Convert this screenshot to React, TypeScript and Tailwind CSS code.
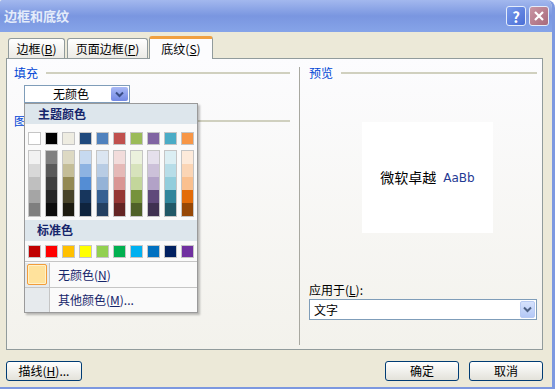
import React from 'react';

const font = { fontFamily: '"Noto Sans CJK SC", "Liberation Sans", sans-serif' };

const theme = ['#FFFFFF', '#000000', '#EEECE1', '#1F497D', '#4F81BD', '#C0504D', '#9BBB59', '#8064A2', '#4BACC6', '#F79646'];
const shades = [
	['#F2F2F2', '#D8D8D8', '#BFBFBF', '#A5A5A5', '#7F7F7F'],
	['#7F7F7F', '#595959', '#3F3F3F', '#262626', '#0C0C0C'],
	['#DDD9C3', '#C4BD97', '#938953', '#494429', '#1D1B10'],
	['#C6D9F0', '#8DB3E2', '#548DD4', '#17365D', '#0F243E'],
	['#DBE5F1', '#B8CCE4', '#95B3D7', '#366092', '#244061'],
	['#F2DCDB', '#E5B9B7', '#D99694', '#953734', '#632423'],
	['#EBF1DD', '#D7E3BC', '#C3D69B', '#76923C', '#4F6128'],
	['#E5E0EC', '#CCC1D9', '#B2A2C7', '#5F497A', '#3F3151'],
	['#DBEEF3', '#B7DDE8', '#92CDDC', '#31859B', '#205867'],
	['#FDEADA', '#FBD5B5', '#FAC08F', '#E36C09', '#974806'],
];
const standard = ['#C00000', '#FF0000', '#FFC000', '#FFFF00', '#92D050', '#00B050', '#00B0F0', '#0070C0', '#002060', '#7030A0'];

function Chevron({ color = '#4D6185' }: { color?: string }) {
	return (
		<svg width="9" height="7" viewBox="0 0 9 7">
			<path d="M1 1.5 L4.5 5 L8 1.5" fill="none" stroke={color} strokeWidth="2" />
		</svg>
	);
}

function SectionHead({ label }: { label: string }) {
	return (
		<div className="flex items-center h-[14px]">
			<span className="text-[12px] leading-none text-[#0046D5]">{label}</span>
			<div className="flex-1 ml-[8px] h-[2px] bg-[#D0D0BF]" />
		</div>
	);
}

function XpButton({ children, className }: { children: React.ReactNode; className?: string }) {
	return (
		<div
			className={`h-[20px] flex items-center justify-center rounded-[3px] border border-[#003C74] bg-gradient-to-b from-[#FFFFFF] to-[#E3E2DA] text-[12px] text-black ${className ?? ''}`}
		>
			{children}
		</div>
	);
}

function ColorPopup() {
	return (
		<div className="absolute left-[24px] top-[103px] w-[174px] h-[210px] border border-[#9A9A9A] bg-[#FAFAFA] shadow-[2px_2px_2px_rgba(0,0,0,0.25)] flex flex-col">
			<div className="h-[20px] bg-[#DDE6EC] flex items-center pl-[13px] text-[12px] font-bold text-[#15256B]">主题颜色</div>
			<div className="flex gap-[4px] pl-[3px] mt-[8px]">
				{theme.map((c) => (
					<div key={c} className="w-[13px] h-[13px] border border-[#C5C5C5]" style={{ background: c }} />
				))}
			</div>
			<div className="flex gap-[4px] pl-[3px] mt-[5px]">
				{shades.map((col, i) => (
					<div key={i} className="w-[13px] border border-[#C5C5C5] flex flex-col">
						{col.map((c, j) => (
							<div key={j} className="h-[13px]" style={{ background: c }} />
						))}
					</div>
				))}
			</div>
			<div className="h-[22px] mt-[3px] bg-[#DDE6EC] flex items-center pl-[12px] text-[12px] font-bold text-[#15256B]">标准色</div>
			<div className="flex gap-[4px] pl-[3px] mt-[4px]">
				{standard.map((c) => (
					<div key={c} className="w-[13px] h-[13px] border border-[#C5C5C5]" style={{ background: c }} />
				))}
			</div>
			<div className="h-[2px] mt-[3px] border-t border-[#C5C5C5]" />
			<div className="flex h-[25px] border-b border-[#C5C5C5]">
				<div className="w-[25px] bg-[#E6EAED] border-r border-[#C5C5C5] flex items-center justify-center">
					<div className="w-[20px] h-[21px] rounded-[2px] border border-[#F29C3A] bg-[#FFE29C] shadow-[inset_0_0_0_1px_#FFF1C8]" />
				</div>
				<div className="flex items-center pl-[8px] text-[12px] text-[#15256B]">
					无颜色(<u>N</u>)
				</div>
			</div>
			<div className="flex h-[25px]">
				<div className="w-[25px] bg-[#E6EAED] border-r border-[#C5C5C5]" />
				<div className="flex items-center pl-[8px] text-[12px] text-[#15256B]">
					其他颜色(<u>M</u>)...
				</div>
			</div>
		</div>
	);
}

export default function App() {
	return (
		<div className="w-[558px] h-[389px] bg-white relative overflow-hidden" style={font}>
			<div className="w-[555px] h-[389px] flex flex-col rounded-tr-[8px] rounded-tl-[2px] overflow-hidden bg-[#ECE9D8] border-r-[3px] border-b-[2px] border-[#7C98E0]">
				{/* title bar */}
				<div className="h-[32px] shrink-0 flex items-center bg-gradient-to-b from-[#A3B8EE] via-[#7A96E0] to-[#86A4E8] pl-[4px] pr-[3px]">
					<span className="text-[13px] font-bold text-[#E4ECFA]">边框和底纹</span>
					<div className="flex-1" />
					<div className="w-[20px] h-[20px] rounded-[3px] border border-[#E4ECFA] bg-gradient-to-br from-[#7A9AEB] to-[#4A6ED6] flex items-center justify-center text-white font-bold text-[15px] leading-none">?</div>
					<div className="w-[20px] h-[20px] ml-[3px] rounded-[3px] border border-[#E4ECFA] bg-gradient-to-br from-[#C996A4] to-[#A86A7C] flex items-center justify-center">
						<svg width="12" height="12" viewBox="0 0 12 12">
							<path d="M2 2 L10 10 M10 2 L2 10" stroke="#FFFFFF" strokeWidth="2.2" />
						</svg>
					</div>
				</div>

				{/* body */}
				<div className="flex-1 flex flex-col pl-[6px] pr-[9px]">
					<div className="flex items-end h-[26px] pl-[2px]">
						<div className="h-[20px] w-[57px] flex items-center justify-center border border-b-0 border-[#919B9C] rounded-t-[3px] bg-gradient-to-b from-[#FFFFFF] to-[#ECEBE6] text-[12px]">
							边框(<u>B</u>)
						</div>
						<div className="h-[20px] w-[81px] ml-[2px] flex items-center justify-center border border-b-0 border-[#919B9C] rounded-t-[3px] bg-gradient-to-b from-[#FFFFFF] to-[#ECEBE6] text-[12px]">
							页面边框(<u>P</u>)
						</div>
						<div className="relative z-10 h-[23px] -mb-[1px] w-[64px] ml-[1px] flex items-center justify-center border border-b-0 border-[#919B9C] border-t-[3px] border-t-[#F0A040] rounded-t-[3px] bg-[#FCFCFE] text-[12px]">
							底纹(<u>S</u>)
						</div>
					</div>
					<div className="h-[292px] border border-[#919B9C] bg-gradient-to-b from-[#FCFCFE] to-[#F3F2EC] flex pl-[7px]">
						<div className="w-[276px] pt-[7px] flex flex-col">
							<SectionHead label="填充" />
							<div className="ml-[10px] mt-[5px] w-[106px] h-[18px] border border-[#7F9DB9] bg-white flex items-center">
								<span className="flex-1 text-center text-[12px] pl-[6px]">无颜色</span>
								<div className="w-[17px] h-[14px] mr-[1px] rounded-[2px] bg-gradient-to-b from-[#A9B9F5] to-[#7288E4] flex items-center justify-center">
									<Chevron color="#3A4E86" />
								</div>
							</div>
							<div className="mt-[11px]">
								<SectionHead label="图案" />
							</div>
						</div>
						<div className="ml-[9px] mt-[8px] mb-[4px] w-px bg-[#A8A8A0]" />
						<div className="ml-[9px] w-[228px] pt-[7px] flex flex-col">
							<SectionHead label="预览" />
							<div className="ml-[53px] mt-[42px] w-[131px] h-[111px] bg-white flex items-center justify-center">
								<span className="text-[14px] text-black">微软卓越</span>
								<span className="ml-[7px] text-[12px] text-[#1F3A93]" style={{ fontFamily: '"DejaVu Sans", sans-serif' }}>
									AaBb
								</span>
							</div>
							<div className="mt-[50px] text-[12px] leading-[14px]">
								应用于(<u>L</u>):
							</div>
							<div className="mt-[2px] h-[21px] border border-[#7F9DB9] bg-white flex items-center">
								<span className="flex-1 pl-[4px] text-[12px]">文字</span>
								<div className="w-[15px] h-[17px] mr-[1px] rounded-[2px] bg-gradient-to-b from-[#D6E2FC] to-[#B4C8F6] border border-[#B9CBF3] flex items-center justify-center">
									<Chevron />
								</div>
							</div>
						</div>
					</div>
					<div className="flex mt-[11px]">
						<XpButton className="w-[76px]">
							描线(<u>H</u>)...
						</XpButton>
						<div className="flex-1" />
						<XpButton className="w-[74px]">确定</XpButton>
						<XpButton className="w-[74px] ml-[10px]">取消</XpButton>
					</div>
				</div>
			</div>
			<ColorPopup />
		</div>
	);
}
